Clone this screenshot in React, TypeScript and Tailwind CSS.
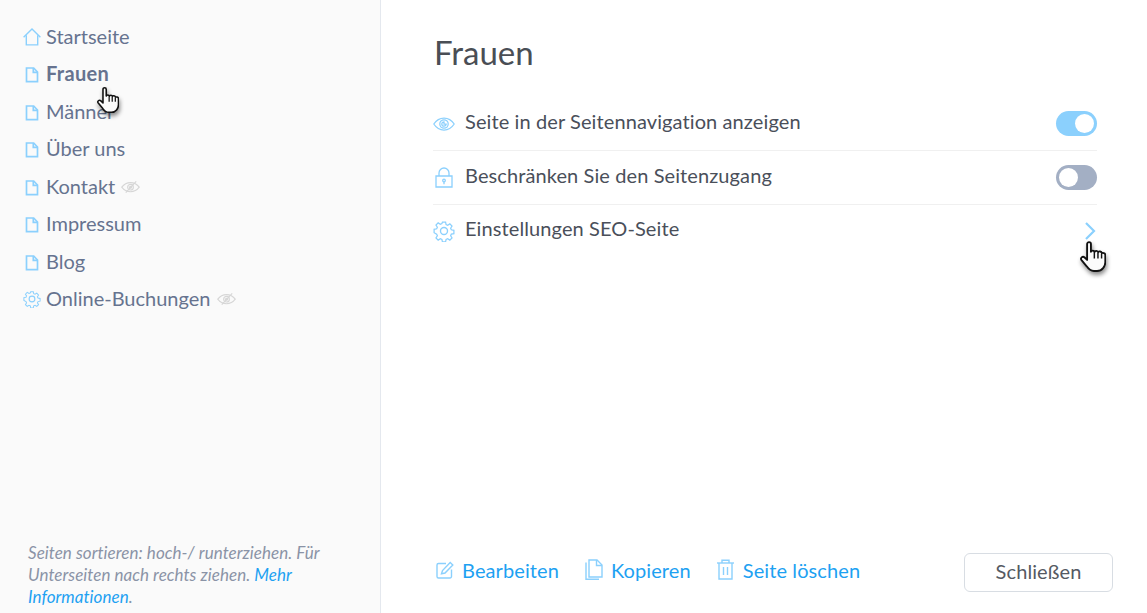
import type { ReactNode } from 'react'

const font = { fontFamily: 'Lato, "Open Sans", sans-serif' }

function PageIcon() {
  return (
    <svg width="14" height="16" viewBox="0 0 14 16" fill="none" stroke="#8bd0fd" strokeWidth="1.7" className="shrink-0">
      <path d="M1.500 1h7.200l3.800 4v9.700H1.500z" />
      <path d="M8.300 1v4.400h4.200" />
    </svg>
  )
}

function HomeIcon() {
  return (
    <svg width="18" height="18" viewBox="0 0 18 18" fill="none" stroke="#8bd0fd" strokeWidth="1.4" className="shrink-0">
      <path d="M.6 9.200 9 1l8.400 8.200" />
      <path d="M3.300 7.200v9.700h11.400V7.200" />
    </svg>
  )
}

function GearIcon({ size = 18 }: { size?: number }) {
  return (
    <svg width={size} height={size} viewBox="0 0 20 20" fill="none" stroke="#8bd0fd" strokeWidth="1.25" className="shrink-0">
      <circle cx="10" cy="10" r="3.200" />
      <path d="M8.400 1h3.200l.5 2.500 1.600.7 2.200-1.400 2.200 2.300-1.400 2.100.7 1.600 2.600.5v3.400l-2.600.5-.7 1.600 1.400 2.100-2.200 2.300-2.200-1.400-1.600.7-.5 2.500H8.400l-.5-2.500-1.600-.7-2.200 1.400-2.200-2.300 1.400-2.100-.7-1.600L0 11.700V8.300l2.600-.5.7-1.600-1.400-2.100 2.200-2.300 2.200 1.400 1.600-.7z" transform="translate(1 1) scale(.9)" />
    </svg>
  )
}

function EyeOffIcon() {
  return (
    <svg width="19" height="14" viewBox="0 0 20 14" fill="none" stroke="#d6d6d6" strokeWidth="1.2" className="shrink-0">
      <path d="M.8 7.200C3.200 4 6.300 2.400 10 2.400s6.800 1.600 9.200 4.800C16.800 10.400 13.700 12 10 12S3.200 10.400.8 7.200z" />
      <circle cx="10" cy="7.200" r="3" />
      <circle cx="10" cy="7.200" r="1" />
      <path d="M5 13 16 1" />
    </svg>
  )
}

function EyeIcon() {
  return (
    <svg width="22" height="14" viewBox="0 0 22 14" fill="none" stroke="#8bd0fd" strokeWidth="1.25" className="shrink-0">
      <path d="M.8 7C3.400 3 6.800 1 11 1s7.600 2 10.200 6c-2.600 4-6 6-10.200 6S3.400 11 .8 7z" />
      <circle cx="11" cy="7" r="4.200" />
      <path d="M11 4.800A2.200 2.200 0 1 0 13.200 7H11z" />
    </svg>
  )
}

function LockIcon() {
  return (
    <svg width="18" height="21" viewBox="0 0 18 21" fill="none" stroke="#8bd0fd" strokeWidth="1.3" className="shrink-0">
      <path d="M1 9h16v11H1z" />
      <path d="M4 9V6a5 5 0 0 1 10 0v3" />
      <circle cx="9" cy="13.500" r="1.300" />
      <path d="M9 15v2.200" />
    </svg>
  )
}

function EditIcon() {
  return (
    <svg width="18" height="18" viewBox="0 0 18 18" fill="none" stroke="#8bd0fd" strokeWidth="1.4" className="shrink-0">
      <path d="M10 2.500H2.500a1.500 1.500 0 0 0-1.500 1.500v11.500A1.500 1.500 0 0 0 2.500 17H14a1.500 1.500 0 0 0 1.500-1.500V8.500" />
      <path d="M5.500 12.800 6.500 9.500 14.200 1.500 16.800 4 9 12z" />
    </svg>
  )
}

function CopyIcon() {
  return (
    <svg width="18" height="21" viewBox="0 0 18 21" fill="none" stroke="#8bd0fd" strokeWidth="1.4" className="shrink-0">
      <path d="M4 1h8l5 5v12H4z" />
      <path d="M11.500 1v5.500H17" />
      <path d="M1 3.500V20.300h13" />
    </svg>
  )
}

function TrashIcon() {
  return (
    <svg width="19" height="21" viewBox="0 0 18 21" fill="none" stroke="#8bd0fd" strokeWidth="1.4" className="shrink-0 -ml-px">
      <path d="M.5 4h17" />
      <path d="M5.500 4V1.200h7V4" />
      <path d="M2.500 4v16h13V4" />
      <path d="M7 8v8M11 8v8" />
    </svg>
  )
}

function HandCursor({ className }: { className: string }) {
  return (
    <svg viewBox="0 0 25 30" className={className}>
      <path
        d="M6.800 3c0-2.500 3.700-2.500 3.700 0v7.500c.3-1.700 3.200-1.700 3.500.2.400-1.600 3.200-1.600 3.500.3.400-1.400 3.300-1.200 3.500.8.700-.5 3.400-.3 3.400 1.700v7c0 4-3 8.500-8 8.500h-3c-3.500 0-5-1.500-7-4.500l-5-6c-1.500-2 1-4.300 3-2.500l2.400 2.300z"
        fill="#fbfbfb"
        stroke="#111"
        strokeWidth="1.800"
        strokeLinejoin="round"
      />
      <path d="M13.800 11v6M17.300 11.500v5.500M20.800 12.500v4.500" stroke="#111" strokeWidth="1.400" fill="none" />
    </svg>
  )
}

function NavRow({ icon, label, bold, hidden, page }: { icon: ReactNode; label: string; bold?: boolean; hidden?: boolean; page?: boolean }) {
  return (
    <div className="h-[37.5px] flex items-center">
      <div className={`w-[18px] flex justify-center ${page ? 'mt-[4px]' : 'mt-[2px]'}`}>{icon}</div>
      <span className={`ml-[5px] text-[20px] text-[#66738f] ${bold ? 'font-bold tracking-[0.3px]' : ''}`}>{label}</span>
      {hidden && (
        <span className="ml-[6px] mt-[2px]">
          <EyeOffIcon />
        </span>
      )}
    </div>
  )
}

function Toggle({ on }: { on: boolean }) {
  return (
    <div className={`w-[41px] h-[25px] rounded-full p-[3px] flex ${on ? 'bg-[#8bd0fd] justify-end' : 'bg-[#a3afc4] justify-start'}`}>
      <div className="w-[19px] h-[19px] rounded-full bg-white" />
    </div>
  )
}

function SettingRow({ icon, label, children, last }: { icon: ReactNode; label: string; children: ReactNode; last?: boolean }) {
  return (
    <div className={`flex items-center justify-between ${last ? 'h-[52px]' : 'h-[54px] border-b border-[#f0f0f0]'}`}>
      <div className="flex items-center">
        <div className="w-[22px] flex justify-center">{icon}</div>
        <span className="ml-[10px] pb-[6px] text-[20px] tracking-[0.1px] text-[#4a4f5a]">{label}</span>
      </div>
      {children}
    </div>
  )
}

function ActionLink({ icon, label }: { icon: ReactNode; label: string }) {
  return (
    <a className="flex items-center gap-[8px] text-[20px] tracking-[0.1px] text-[#1da1f2]">
      {icon}
      {label}
    </a>
  )
}

export default function App() {
  return (
    <div className="relative flex w-[1147px] h-[613px] overflow-hidden bg-white" style={font}>
      {/* Sidebar */}
      <aside className="w-[381px] h-full shrink-0 flex flex-col justify-between bg-[#fafafa] border-r border-[#e4e8ee] pl-[23px] pt-[17px] pb-[5px]">
        <nav>
          <NavRow icon={<HomeIcon />} label="Startseite" />
          <NavRow icon={<PageIcon />} label="Frauen" bold page />
          <NavRow icon={<PageIcon />} label="Männer" page />
          <NavRow icon={<PageIcon />} label="Über uns" page />
          <NavRow icon={<PageIcon />} label="Kontakt" hidden page />
          <NavRow icon={<PageIcon />} label="Impressum" page />
          <NavRow icon={<PageIcon />} label="Blog" page />
          <NavRow icon={<GearIcon />} label="Online-Buchungen" hidden />
        </nav>
        <p className="pl-[5px] w-[310px] text-[17px] tracking-[0.05px] leading-[22px] italic text-[#8a93a6]">
          Seiten sortieren: hoch-/ runterziehen. Für Unterseiten nach rechts ziehen.{' '}
          <span className="text-[#1da1f2]">Mehr</span> <span className="text-[#1da1f2]">Informationen</span>.
        </p>
      </aside>

      {/* Main panel */}
      <main className="flex-1 flex flex-col justify-between pl-[52px] pr-[34px] pt-[33px] pb-[21px]">
        <div className="pr-[16px]">
          <h1 className="ml-px text-[33px] leading-[38px] text-[#4a4e55]">Frauen</h1>
          <div className="mt-[26px]">
            <SettingRow icon={<EyeIcon />} label="Seite in der Seitennavigation anzeigen">
              <Toggle on />
            </SettingRow>
            <SettingRow icon={<LockIcon />} label="Beschränken Sie den Seitenzugang">
              <Toggle on={false} />
            </SettingRow>
            <SettingRow icon={<GearIcon size={22} />} label="Einstellungen SEO-Seite" last>
              <svg width="12" height="18" viewBox="0 0 12 18" fill="none" stroke="#8bd0fd" strokeWidth="2.200" className="mr-[1px]">
                <path d="M2 1l8 8-8 8" />
              </svg>
            </SettingRow>
          </div>
        </div>
        <div className="flex items-center justify-between">
          <div className="flex items-center gap-[26px] pl-[3px] pb-[6px]">
            <ActionLink icon={<EditIcon />} label="Bearbeiten" />
            <ActionLink icon={<CopyIcon />} label="Kopieren" />
            <ActionLink icon={<TrashIcon />} label="Seite löschen" />
          </div>
          <button className="w-[149px] h-[39px] pb-[4px] rounded-[6px] border border-[#d8dde3] bg-white text-[20px] tracking-[0.1px] text-[#555a63]">
            Schließen
          </button>
        </div>
      </main>

      <HandCursor className="absolute left-[97px] top-[86px] w-[22px] h-[28px] drop-shadow-[1px_3px_2px_rgba(0,0,0,0.45)]" />
      <HandCursor className="absolute left-[1080px] top-[241px] w-[26px] h-[31px] drop-shadow-[1px_3px_2px_rgba(0,0,0,0.45)]" />
    </div>
  )
}
